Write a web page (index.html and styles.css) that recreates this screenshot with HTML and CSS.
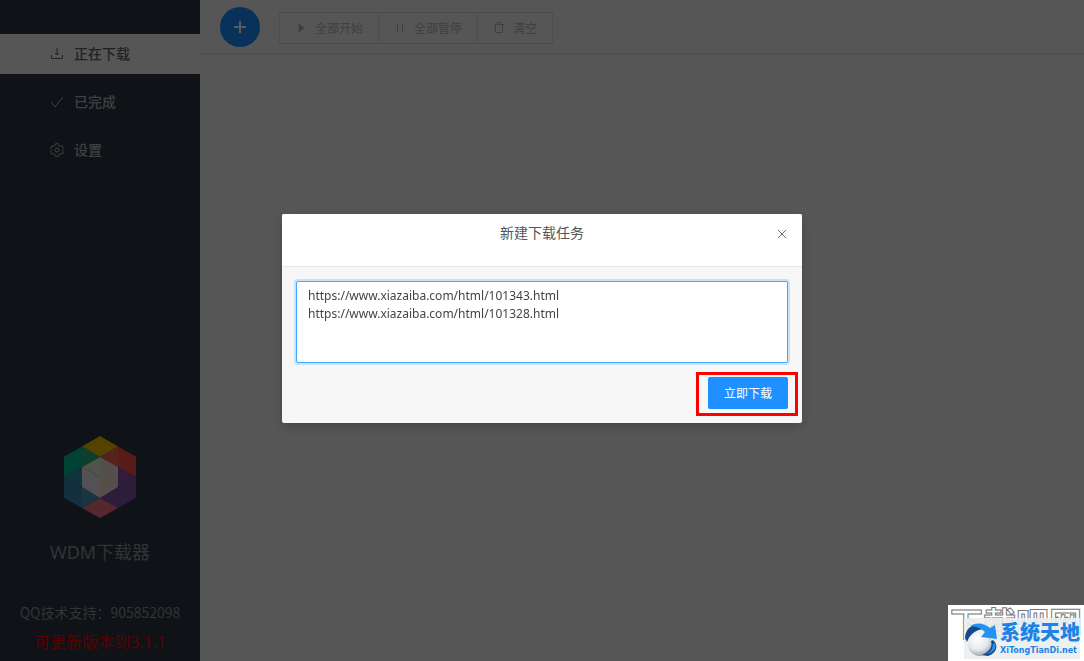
FILE: index.html
```html
<!DOCTYPE html>
<html lang="zh-CN">
<head>
  <meta charset="UTF-8">
  <title>WDM下载器</title>
  <meta name="viewport" content="width=device-width, initial-scale=1.0">
  <link rel="stylesheet" href="styles.css">
</head>
<body>
  <div class="app">
    <aside class="sidebar">
      <nav class="menu">
        <a class="menu-item active" href="#downloading">
          <svg class="icon" viewBox="0 0 14 14"><path d="M7 1v7M5 6l2 2 2-2M1.500 8v3.500h11V8"/></svg>
          正在下载
        </a>
        <a class="menu-item" href="#finished">
          <svg class="icon" viewBox="0 0 14 14"><path d="M1 7l4 5 8-10"/></svg>
          已完成
        </a>
        <a class="menu-item" href="#settings">
          <svg class="icon" viewBox="0 0 14 14"><path d="M5.500 .7h3l.5 1.900 1.200.7 1.900-.5 1.400 2.500-1.300 1.300v.8l1.300 1.300-1.400 2.500-1.900-.5-1.200.7-.5 1.900h-3L5 11.400l-1.200-.7-1.900.5L.5 8.700l1.300-1.300v-.8L.5 5.300l1.400-2.500 1.900.5L5 2.600z"/><circle cx="7" cy="7" r="2"/></svg>
          设置
        </a>
      </nav>

      <div class="about">
        <svg class="logo" viewBox="0 0 72 82">
          <path fill="#f3bc00" d="M36 0l18 10.500L36 21 18 10.500z"/>
          <path fill="#f36150" d="M54 10.500v20.500L36 21z"/>
          <path fill="#fb5047" d="M54 10.500L72 20.500v20.500L54 31z"/>
          <path fill="#8f50b1" d="M54 31l18 10-18 10z"/>
          <path fill="#7e56a6" d="M72 41v21L54 72V51z"/>
          <path fill="#8752ac" d="M54 51v21L36 62z"/>
          <path fill="#f07283" d="M36 62l18 10-18 10-18-10z"/>
          <path fill="#4a95bc" d="M18 51l18 11-18 10z"/>
          <path fill="#3989b7" d="M0 41l18 10v21L0 62z"/>
          <path fill="#2e93ac" d="M18 31v20L0 41z"/>
          <path fill="#00bc95" d="M0 20.500l18-10V31L0 41z"/>
          <path fill="#28b17e" d="M18 10.500L36 21 18 31z"/>
          <path fill="#efe9f0" d="M18 31l18 10v21L18 51z"/>
          <path fill="#e4f0d8" d="M36 21v20L18 31z"/>
          <path fill="#efe3d8" d="M36 21l18 10v20L36 62z"/>
        </svg>
        <p class="name">WDM下载器</p>
        <p class="support">QQ技术支持：905852098</p>
        <a class="update" href="#update">可更新版本到3.1.1</a>
      </div>
    </aside>

    <main class="content">
      <header class="toolbar">
        <button class="add" type="button" aria-label="新建">
          <svg viewBox="0 0 12 12"><path d="M6 0v12M0 6h12"/></svg>
        </button>
        <div class="group">
          <button type="button"><svg viewBox="0 0 12 12"><path class="solid" d="M4 2l5 4-5 4z"/></svg>全部开始</button>
          <button type="button"><svg viewBox="0 0 12 12"><path d="M3.500 2v8M8.500 2v8"/></svg>全部暂停</button>
          <button type="button"><svg viewBox="0 0 12 12"><path d="M1 2.500h10M4 2.500v-2h4v2M2.500 2.500v8h7v-8"/></svg>清空</button>
        </div>
      </header>
    </main>
  </div>

  <div class="mask">
    <section class="modal" role="dialog" aria-labelledby="modal-title">
      <header class="modal-header">
        <h1 class="modal-title" id="modal-title">新建下载任务</h1>
        <button class="close" type="button" aria-label="关闭">
          <svg viewBox="0 0 10 10"><path d="M1 1l8 8M9 1L1 9"/></svg>
        </button>
      </header>
      <form class="modal-body">
        <textarea class="urls" aria-labelledby="modal-title" spellcheck="false">https://www.xiazaiba.com/html/101343.html
https://www.xiazaiba.com/html/101328.html</textarea>
        <div class="submit-wrap">
          <button class="submit" type="button">立即下载</button>
        </div>
      </form>
    </section>
  </div>

  <div class="watermark">
    <span class="ghost">下载吧网</span>
    <div class="brand">
      <svg class="globe" viewBox="0 0 36 36">
        <defs>
          <radialGradient id="ball" cx=".4" cy=".3" r=".75">
            <stop offset="0" stop-color="#ffffff"/>
            <stop offset=".6" stop-color="#e4e8ec"/>
            <stop offset="1" stop-color="#8f9aa5"/>
          </radialGradient>
        </defs>
        <path fill="#124b8d" d="M1 17C1 9 7 3 14 4l6 4C11 9 6 13 3 21z"/>
        <circle cx="16" cy="23" r="12" fill="url(#ball)"/>
        <path fill="#2492f2" d="M6 5C13 1 20 2 26 7l5-3 2 14-16-2 4-5C17 7 12 5 6 5z"/>
        <path fill="#124b8d" d="M29 19c6 5 4 13-5 16l-6-1c7-3 11-8 9-14z"/>
        <path fill="#2492f2" d="M31 22c2 5-2 10-8 11 4-3 6-6 6-10z"/>
      </svg>
      <div class="brand-text">
        <strong>系统天地</strong>
        <span>XiTongTianDi.net</span>
      </div>
    </div>
  </div>
</body>
</html>
```
FILE: styles.css
```css
* {
  box-sizing: border-box;
}
body {
  margin: 0;
  font-family: "Noto Sans", "Noto Sans CJK SC", sans-serif;
  font-size: 14px;
  color: #555;
  overflow: hidden;
}
button, textarea {
  font-family: inherit;
}
svg {
  display: block;
  fill: none;
  stroke: currentColor;
}
p {
  margin: 0;
}
a {
  text-decoration: none;
}

.app {
  display: flex;
  min-height: 100vh;
  background: #f5f5f5;
}

/* sidebar */
.sidebar {
  display: flex;
  flex-direction: column;
  justify-content: space-between;
  width: 200px;
  padding: 34px 0 8px;
  background: #2b363f;
}
.menu {
  display: flex;
  flex-direction: column;
  gap: 8px;
}
.menu-item {
  display: flex;
  align-items: center;
  gap: 10px;
  height: 40px;
  padding: 0 0 2px 50px;
  font-weight: 500;
  color: #b4b8bb;
}
.menu-item.active {
  background: #f5f5f5;
  color: #59616a;
}
.icon {
  width: 14px;
  height: 14px;
  margin-top: 2px;
}
.about {
  display: flex;
  flex-direction: column;
  align-items: center;
  color: #8d9499;
}
.logo {
  width: 72px;
  height: 82px;
  stroke: none;
}
.name {
  margin: 20px 0 36px;
  font-size: 18px;
  line-height: 28px;
}
.support {
  font-family: "Noto Sans CJK SC", sans-serif;
  line-height: 20px;
}
.update {
  margin-top: 9px;
  font-size: 16px;
  line-height: 22px;
  color: #f00;
}

/* toolbar */
.content {
  flex: 1;
}
.toolbar {
  display: flex;
  align-items: center;
  gap: 19px;
  height: 54px;
  padding-left: 20px;
  border-bottom: 1px solid #dcdcdc;
}
.add {
  display: grid;
  place-items: center;
  width: 40px;
  height: 40px;
  padding: 0;
  border: none;
  border-radius: 50%;
  background: #1890ff;
  color: #fff;
}
.add svg {
  width: 12px;
  stroke-width: 2;
}
.group {
  display: flex;
  margin-top: 2px;
  border: 1px solid #dcdcdc;
  border-radius: 2px;
}
.group button {
  display: flex;
  align-items: center;
  gap: 8px;
  height: 30px;
  padding: 0 15px;
  border: none;
  background: none;
  font-size: 12px;
  color: #b8b8b8;
}
.group button + button {
  border-left: 1px solid #dcdcdc;
}
.group svg {
  width: 12px;
}
.solid {
  fill: currentColor;
}

/* dialog */
.mask {
  position: fixed;
  inset: 0;
  display: flex;
  align-items: center;
  justify-content: center;
  padding-bottom: 24px;
  background: rgba(0, 0, 0, 0.65);
}
.modal {
  width: 520px;
  border-radius: 2px;
  background: #f7f7f7;
  box-shadow: 0 4px 12px rgba(0, 0, 0, 0.2);
}
.modal-header {
  display: grid;
  grid-template-columns: 40px 1fr 40px;
  align-items: start;
  height: 53px;
  border-bottom: 1px solid #e8e8e8;
  border-radius: 2px 2px 0 0;
  background: #fff;
}
.modal-title {
  grid-column: 2;
  margin: 0;
  font-size: 14px;
  font-weight: 400;
  line-height: 38px;
  text-align: center;
}
.close {
  display: grid;
  place-items: center;
  height: 40px;
  padding: 0;
  border: none;
  background: none;
  color: #666;
}
.close svg {
  width: 10px;
}
.modal-body {
  display: flex;
  flex-direction: column;
  align-items: flex-end;
  gap: 14px;
  padding: 14px;
}
.urls {
  width: 100%;
  height: 82px;
  padding: 5px 11px;
  border: 1px solid #40a9ff;
  border-radius: 2px;
  outline: none;
  box-shadow: 0 0 0 2px rgba(24, 144, 255, 0.2);
  background: #fff;
  color: #444;
  font-size: 12px;
  line-height: 18px;
  resize: none;
}
.submit-wrap {
  position: relative;
}
.submit-wrap::after {
  content: "";
  position: absolute;
  inset: -5px -10px -7px -12px;
  border: 3px solid #f00;
  pointer-events: none;
}
.submit {
  display: block;
  width: 80px;
  height: 32px;
  padding: 0;
  border: none;
  border-radius: 2px;
  background: #1e90ff;
  color: #fff;
  font-size: 12px;
}

/* corner badge */
.watermark {
  position: fixed;
  right: 0;
  bottom: 0;
  width: 136px;
  padding: 13px 4px 2px 16px;
  overflow: hidden;
  background: #fff;
}
.ghost {
  position: absolute;
  top: 0;
  left: 2px;
  font-size: 33px;
  font-weight: 700;
  line-height: 38px;
  white-space: nowrap;
  color: #fff;
  -webkit-text-stroke: 1px #777;
}
.brand {
  position: relative;
  display: flex;
  align-items: center;
  height: 41px;
  background: rgba(234, 238, 240, 0.9);
}
.globe {
  flex: none;
  width: 36px;
  height: 36px;
  stroke: none;
}
.brand-text {
  display: flex;
  flex-direction: column;
  color: #1b83e8;
}
.brand-text strong {
  font-size: 20px;
  font-weight: 900;
  line-height: 24px;
}
.brand-text span {
  font-family: "DejaVu Sans", sans-serif;
  font-size: 8px;
  font-weight: 700;
  line-height: 12px;
}
```
